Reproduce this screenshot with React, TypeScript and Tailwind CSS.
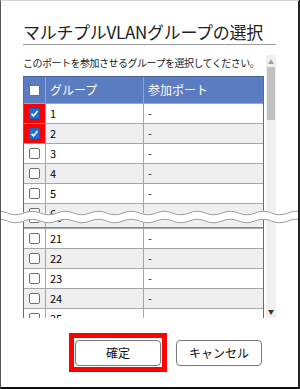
import React from 'react';

const JP = "'Noto Sans CJK JP', 'Liberation Sans', sans-serif";

const Box = ({ checked }: { checked?: boolean }) =>
  checked ? (
    <div className="w-[11px] h-[11px] bg-[#1f6fd6] border border-[#1a5fb8] rounded-[1px] flex items-center justify-center">
      <svg width="9" height="9" viewBox="0 0 9 9">
        <path d="M1.5 4.8 L3.6 6.8 L7.6 2" stroke="white" strokeWidth="1.6" fill="none" />
      </svg>
    </div>
  ) : (
    <div className="w-[11px] h-[11px] bg-white border border-[#6f6f6f] rounded-[2px]" />
  );

const Row = ({ n, checked, dash = true }: { n: number; checked?: boolean; dash?: boolean }) => (
  <div
    className={`grid grid-cols-[22px_98px_1fr] h-[20px] border-t border-[#a6a6a6] ${
      n % 2 === 0 ? 'bg-[#efefef]' : 'bg-white'
    }`}
  >
    <div
      className={`flex items-center justify-center border-r border-[#a6a6a6] ${
        checked ? 'bg-[#ff0000]' : ''
      }`}
    >
      <Box checked={checked} />
    </div>
    <div className="flex items-center pl-[4px] text-[11px] text-black border-r border-[#a6a6a6]">{n}</div>
    <div className="flex items-center pl-[4px] text-[11px] text-[#222]">{dash ? '-' : ''}</div>
  </div>
);

const wave = (() => {
  let d = 'M-10 0';
  for (let x = -10; x < 320; x += 33) {
    d += ` Q ${x + 8.25} -3.5 ${x + 16.5} 0 Q ${x + 24.75} 3.5 ${x + 33} 0`;
  }
  return d;
})();

export default function App() {
  return (
    <div
      className="w-[300px] h-[389px] bg-white border-t border-t-[#d4d4d4] border-l border-l-[#555] border-r-2 border-r-[#222] border-b-2 border-b-[#111] pl-[22px] pr-[22px] relative overflow-hidden"
      style={{ fontFamily: JP }}
    >
      {/* title */}
      <div className="pt-[18px]">
        <div className="h-[26px] leading-[26px] text-[17px] text-[#222] tracking-[-0.3px] border-b border-[#9a9a9a]">
          マルチプルVLANグループの選択
        </div>
      </div>

      {/* scrollable body */}
      <div className="mt-[10px] h-[263px] flex gap-[2px]">
        <div className="w-[241px] h-full overflow-hidden">
          <div className="h-[21px] pt-[1px] leading-[14px] text-[10px] text-[#222] tracking-[-0.5px] whitespace-nowrap">
            このポートを参加させるグループを選択してください。
          </div>
          <div className="border-l border-r border-[#6a6a6a]">
            <div className="grid grid-cols-[22px_98px_1fr] h-[27px] bg-[#5b7cc0] border-t border-[#4a64a0] text-white text-[12px]">
              <div className="flex items-center justify-center border-r border-[#8ea3d3]">
                <div className="w-[11px] h-[11px] bg-white border border-[#6f6f6f] rounded-[1px]" />
              </div>
              <div className="flex items-center pl-[4px] border-r border-[#8ea3d3]">グループ</div>
              <div className="flex items-center pl-[4px]">参加ポート</div>
            </div>
            <Row n={1} checked />
            <Row n={2} checked />
            <Row n={3} />
            <Row n={4} />
            <Row n={5} />
            <div className="h-[12px] overflow-hidden">
              <Row n={6} dash={false} />
            </div>
            <div className="h-[13px] overflow-hidden flex flex-col justify-end">
              <div className="border-b border-[#8a8a8a]">
                <Row n={20} dash={false} />
              </div>
            </div>
            <Row n={21} />
            <Row n={22} />
            <Row n={23} />
            <Row n={24} />
            <Row n={25} />
          </div>
        </div>
        {/* scrollbar */}
        <div className="w-[10px] h-full bg-[#f0f0f0] flex flex-col items-center">
          <div className="h-[12px] flex items-center justify-center text-[6px] text-[#a0a0a0]">▲</div>
          <div className="w-[8px] h-[53px] bg-[#c1c1c1]" />
          <div className="flex-1" />
          <div className="h-[14px] flex items-center justify-center text-[6px] text-[#333]">▼</div>
        </div>
      </div>

      {/* footer */}
      <div className="mt-[15px] flex items-center justify-end pr-[14px] gap-[9px]">
        <div className="border-[5px] border-[#ff0000] p-[1px]">
          <button className="w-[86px] h-[26px] bg-white border border-[#7a7a7a] rounded-[4px] text-[12px] text-[#111]">
            確定
          </button>
        </div>
        <button className="w-[86px] h-[26px] bg-white border border-[#7a7a7a] rounded-[4px] text-[12px] text-[#111]">
          キャンセル
        </button>
      </div>

      {/* page break wave */}
      <svg className="absolute left-0 top-[203px]" width="300" height="26" viewBox="0 0 300 26">
        <g transform="translate(0 13)">
          <path d={wave} stroke="white" strokeWidth="9" fill="none" />
          <path d={wave} transform="translate(0 -4)" stroke="#9a9a9a" strokeWidth="1" fill="none" />
          <path d={wave} transform="translate(0 4)" stroke="#9a9a9a" strokeWidth="1" fill="none" />
        </g>
      </svg>
    </div>
  );
}
